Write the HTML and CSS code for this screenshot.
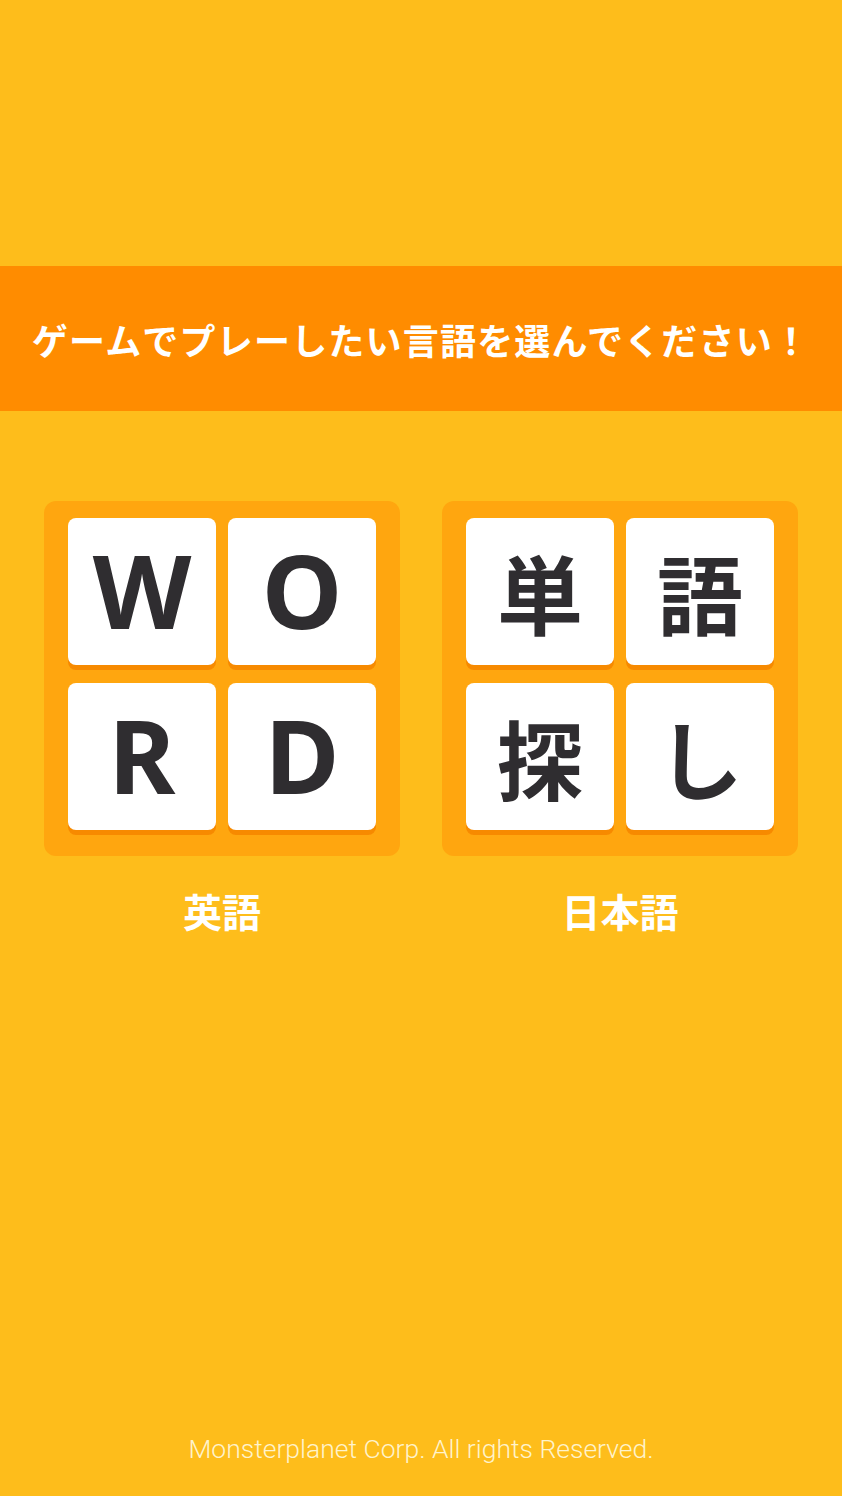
FILE: index.html
```html
<!DOCTYPE html>
<html lang="ja">
<head>
    <meta charset="UTF-8">
    <meta name="viewport" content="width=device-width, initial-scale=1.0">
    <title>言語選択</title>
    <link rel="stylesheet" href="styles.css">
</head>
<body>
    <div class="screen">
        <div class="banner">ゲームでプレーしたい言語を選んでください！</div>

        <div class="choices">
            <div class="choice">
                <div class="board">
                    <div class="tile latin">W</div>
                    <div class="tile latin">O</div>
                    <div class="tile latin">R</div>
                    <div class="tile latin">D</div>
                </div>
                <p class="label">英語</p>
            </div>
            <div class="choice">
                <div class="board">
                    <div class="tile">単</div>
                    <div class="tile">語</div>
                    <div class="tile">探</div>
                    <div class="tile">し</div>
                </div>
                <p class="label">日本語</p>
            </div>
        </div>

        <p class="footer">Monsterplanet Corp. All rights Reserved.</p>
    </div>
</body>
</html>
```

FILE: styles.css
```css
body {
    margin: 0;
    background-color: #febd1b;
    font-family: "Noto Sans CJK JP", "Noto Sans", sans-serif;
}
.screen {
    min-height: 1496px;
    display: flex;
    flex-direction: column;
}
.banner {
    margin-top: 266px;
    height: 145px;
    background-color: #ff8c00;
    color: #fff;
    font-size: 36px;
    font-weight: 700;
    display: flex;
    align-items: center;
    justify-content: center;
    letter-spacing: 1.2px;
}
.choices {
    display: flex;
    justify-content: center;
    gap: 42px;
    margin-top: 90px;
}
.choice {
    width: 356px;
    display: flex;
    flex-direction: column;
    align-items: center;
}
.board {
    width: 356px;
    box-sizing: border-box;
    padding: 17px 24px 26px;
    background-color: #ffa60f;
    border-radius: 12px;
    display: grid;
    grid-template-columns: 148px 148px;
    grid-auto-rows: 147px;
    column-gap: 12px;
    row-gap: 18px;
}
.tile {
    background-color: #fff;
    border-radius: 8px;
    box-shadow: 0 5px 0 #f78a00;
    display: flex;
    align-items: center;
    justify-content: center;
    color: #2f2d30;
    font-size: 86px;
    font-weight: 700;
    line-height: 1;
}
.tile.latin {
    font-family: "Noto Sans", sans-serif;
    font-weight: 700;
    font-size: 102px;
    padding-bottom: 4px;
}
.label {
    margin: 32px 0 0;
    color: #fff;
    font-size: 39px;
    font-weight: 700;
    line-height: 44px;
}
.footer {
    margin: auto 0 30px;
    text-align: center;
    color: #fff3cc;
    font-family: Roboto, sans-serif;
    font-weight: 300;
    font-size: 26.5px;
    line-height: 34px;
}
```
